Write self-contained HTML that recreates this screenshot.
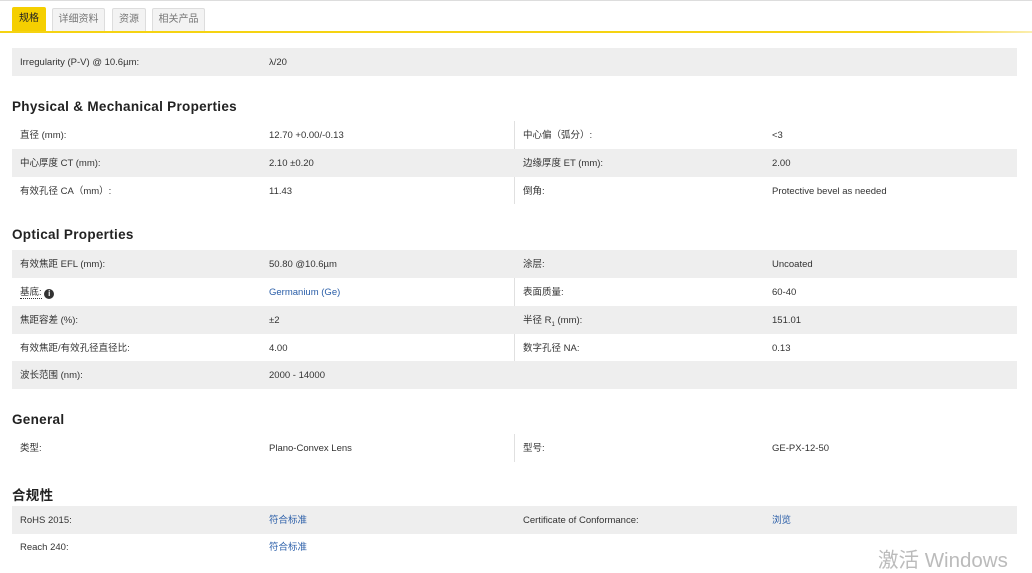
<!DOCTYPE html>
<html><head><meta charset="utf-8"><style>
*{margin:0;padding:0;box-sizing:border-box}
body{width:1032px;height:572px;background:#fff;position:relative;overflow:hidden;font-family:"Liberation Sans","Noto Sans CJK SC",sans-serif;color:#333;font-size:9.5px}
.topline{position:absolute;left:0;top:0;width:1032px;height:1px;background:#ddd}
.yl{position:absolute;left:0;top:31px;width:1032px;height:2px;background:linear-gradient(to right,#f5d312 0,#f5d312 88%,#fbeeb0 100%)}
.tab{position:absolute;top:8px;height:23px;border:1px solid #ddd;border-bottom:none;background:#f3f3f3;color:#777;font-size:10px;line-height:22px;text-align:center;border-radius:2px 2px 0 0}
.tab.a{background:#f5cf00;border-color:#f5cf00;color:#222;top:7px;height:24px}
.row{position:absolute;left:12px;width:1005px;height:28px}
.g{background:#eeeeee}
.t{position:absolute;top:1px;line-height:28px;white-space:nowrap}
.div{position:absolute;left:514px;width:1px;background:#e0e0e0}
h2{position:absolute;left:12px;font-size:13.5px;font-weight:bold;color:#222;letter-spacing:.3px}
.lnk{color:#2a5ea8}
.wm{position:absolute;left:878px;top:543px;font-size:20.5px;color:#bbb}
</style></head><body>
<div class="topline"></div>
<div class="tab a" style="left:12px;width:34px">规格</div>
<div class="tab" style="left:52px;width:53px">详细资料</div>
<div class="tab" style="left:112px;width:34px">资源</div>
<div class="tab" style="left:152px;width:53px">相关产品</div>
<div class="yl"></div>

<div class="row g" style="top:48px"><span class="t" style="left:8px">Irregularity (P-V) @ 10.6µm:</span><span class="t" style="left:257px">λ/20</span></div>

<h2 style="top:99px">Physical &amp; Mechanical Properties</h2>
<div class="div" style="top:121px;height:83px"></div>
<div class="row" style="top:121px"><span class="t" style="left:8px">直径 (mm):</span><span class="t" style="left:257px">12.70 +0.00/-0.13</span><span class="t" style="left:511px">中心偏（弧分）:</span><span class="t" style="left:760px">&lt;3</span></div>
<div class="row g" style="top:149px"><span class="t" style="left:8px">中心厚度 CT (mm):</span><span class="t" style="left:257px">2.10 ±0.20</span><span class="t" style="left:511px">边缘厚度 ET (mm):</span><span class="t" style="left:760px">2.00</span></div>
<div class="row" style="top:177px"><span class="t" style="left:8px">有效孔径 CA（mm）:</span><span class="t" style="left:257px">11.43</span><span class="t" style="left:511px">倒角:</span><span class="t" style="left:760px">Protective bevel as needed</span></div>

<h2 style="top:227px">Optical Properties</h2>
<div class="div" style="top:250px;height:111px"></div>
<div class="row g" style="top:250px"><span class="t" style="left:8px">有效焦距 EFL (mm):</span><span class="t" style="left:257px">50.80 @10.6µm</span><span class="t" style="left:511px">涂层:</span><span class="t" style="left:760px">Uncoated</span></div>
<div class="row" style="top:278px"><span class="t" style="left:8px"><span style="border-bottom:1px dotted #333">基底:</span> <b style="display:inline-block;width:10px;height:10px;border-radius:50%;background:#333;color:#fff;font-size:8px;line-height:10px;text-align:center;vertical-align:-1px">i</b></span><span class="t lnk" style="left:257px">Germanium (Ge)</span><span class="t" style="left:511px">表面质量:</span><span class="t" style="left:760px">60-40</span></div>
<div class="row g" style="top:306px"><span class="t" style="left:8px">焦距容差 (%):</span><span class="t" style="left:257px">±2</span><span class="t" style="left:511px">半径 R<sub style="font-size:6px">1</sub> (mm):</span><span class="t" style="left:760px">151.01</span></div>
<div class="row" style="top:334px"><span class="t" style="left:8px">有效焦距/有效孔径直径比:</span><span class="t" style="left:257px">4.00</span><span class="t" style="left:511px">数字孔径 NA:</span><span class="t" style="left:760px">0.13</span></div>
<div class="row g" style="top:361px"><span class="t" style="left:8px">波长范围 (nm):</span><span class="t" style="left:257px">2000 - 14000</span></div>

<h2 style="top:412px">General</h2>
<div class="div" style="top:434px;height:28px"></div>
<div class="row" style="top:434px"><span class="t" style="left:8px">类型:</span><span class="t" style="left:257px">Plano-Convex Lens</span><span class="t" style="left:511px">型号:</span><span class="t" style="left:760px">GE-PX-12-50</span></div>

<h2 style="top:484px">合规性</h2>
<div class="div" style="top:506px;height:28px"></div>
<div class="row g" style="top:506px"><span class="t" style="left:8px">RoHS 2015:</span><span class="t lnk" style="left:257px">符合标准</span><span class="t" style="left:511px">Certificate of Conformance:</span><span class="t lnk" style="left:760px">浏览</span></div>
<div class="row" style="top:533px"><span class="t" style="left:8px">Reach 240:</span><span class="t lnk" style="left:257px">符合标准</span></div>

<div class="wm">激活 Windows</div>
</body></html>
